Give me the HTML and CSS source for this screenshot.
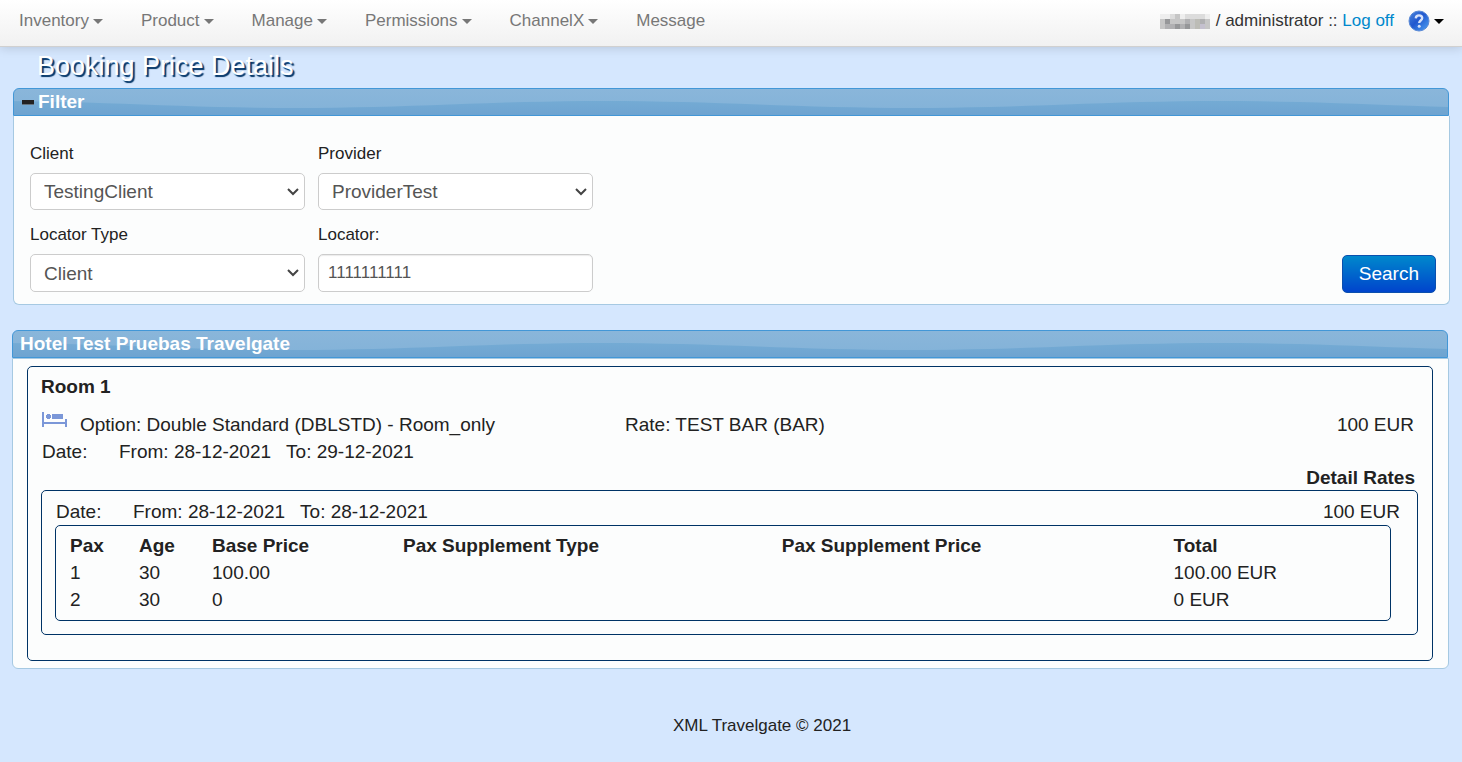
FILE: index.html
```html
<!DOCTYPE html>
<html lang="en">
<head>
<meta charset="utf-8">
<title>Booking Price Details</title>
<link rel="stylesheet" href="styles.css">
</head>
<body>
<header class="navbar">
  <nav class="menu" aria-label="Main">
    <a href="#">Inventory<span class="caret"></span></a>
    <a href="#">Product<span class="caret"></span></a>
    <a href="#">Manage<span class="caret"></span></a>
    <a href="#">Permissions<span class="caret"></span></a>
    <a href="#">ChannelX<span class="caret"></span></a>
    <a href="#">Message</a>
  </nav>
  <div class="account">
    <svg class="redacted" width="50" height="15" viewBox="0 0 50 15" aria-hidden="true">
      <path fill="#dcdcdc" d="M0 0h50v15H0z"/>
      <path fill="#eee" d="M0 0h10v5H0zM20 0h5v5h-5zM45 0h5v5h-5z"/>
      <path fill="#c6c6c6" d="M0 5h5v10H0zM10 5h5v5h-5zM15 0h5v10h-5zM20 5h5v5h-5zM30 5h5v10h-5zM45 5h5v10h-5z"/>
      <path fill="#b0b0b2" d="M5 10h5v5H5zM10 10h5v5h-5zM20 10h5v5h-5zM25 5h5v5h-5zM40 5h5v5h-5z"/>
      <path fill="#969799" d="M5 5h5v5H5zM15 10h5v5h-5zM25 10h5v5h-5z"/>
      <path fill="#bcbcb6" d="M35 5h5v10h-5z"/>
      <path fill="#c4c0ce" d="M40 10h5v5h-5z"/>
    </svg>
    <span>/ administrator :: <a class="logoff" href="#">Log off</a></span>
    <button class="help" type="button" aria-label="Help">
      <svg width="22" height="22" viewBox="0 0 22 22" aria-hidden="true">
        <defs>
          <linearGradient id="helpFill" x1="0" y1="0" x2="1" y2="1">
            <stop offset="0" stop-color="#4a86dc"/>
            <stop offset=".45" stop-color="#2158cf"/>
            <stop offset="1" stop-color="#4fa4f4"/>
          </linearGradient>
        </defs>
        <circle cx="11" cy="11" r="10" fill="url(#helpFill)" stroke="#5b8ad6"/>
        <path d="M7.800 8.400C7.900 6.300 9.200 5.400 11 5.400c1.900 0 3.200 1 3.200 2.700 0 2.300-3 2.500-3 4.900" fill="none" stroke="#d6e2fa" stroke-width="2.400"/>
        <circle cx="11.200" cy="16.200" r="1.500" fill="#d6e2fa"/>
      </svg>
      <span class="caret"></span>
    </button>
  </div>
</header>

<main>
  <h1 class="title">Booking Price Details</h1>

  <section class="panel filter">
    <h2 class="bar">
      <svg class="wave" width="100%" height="100%" aria-hidden="true">
        <defs>
          <linearGradient id="waveFill" x1="0" y1="0" x2="0" y2="1">
            <stop offset="0" stop-color="#74abd4"/>
            <stop offset="1" stop-color="#6ea4d1"/>
          </linearGradient>
          <pattern id="wave" width="616" height="26" x="-26" patternUnits="userSpaceOnUse">
            <path fill="url(#waveFill)" d="M0 12C110 12 200 19 308 19S506 12 616 12V26H0z"/>
          </pattern>
        </defs>
        <rect width="100%" height="100%" fill="url(#wave)"/>
      </svg>
      <svg class="minus" width="12" height="5" viewBox="0 0 12 5" aria-hidden="true"><path fill="#65737e" d="M0 0h12v5H0z"/><path fill="#222" d="M0 0h12v4H0z"/></svg>
      <span class="bar-text">Filter</span>
    </h2>
    <form class="filter-body">
      <div class="field">
        <label for="client">Client</label>
        <div class="select"><select id="client"><option>TestingClient</option></select><svg width="12" height="8" viewBox="0 0 12 8" aria-hidden="true"><path d="M1 1l5 5 5-5"/></svg></div>
      </div>
      <div class="field">
        <label for="provider">Provider</label>
        <div class="select"><select id="provider"><option>ProviderTest</option></select><svg width="12" height="8" viewBox="0 0 12 8" aria-hidden="true"><path d="M1 1l5 5 5-5"/></svg></div>
      </div>
      <div class="field first">
        <label for="locator-type">Locator Type</label>
        <div class="select"><select id="locator-type"><option>Client</option></select><svg width="12" height="8" viewBox="0 0 12 8" aria-hidden="true"><path d="M1 1l5 5 5-5"/></svg></div>
      </div>
      <div class="field">
        <label for="locator">Locator:</label>
        <input id="locator" type="text" value="1111111111">
      </div>
      <button class="search" type="button">Search</button>
    </form>
  </section>

  <section class="panel hotel">
    <h2 class="bar">
      <svg class="wave" width="100%" height="100%" aria-hidden="true"><rect width="100%" height="100%" fill="url(#wave)"/></svg>
      <span class="bar-text">Hotel Test Pruebas Travelgate</span>
    </h2>
    <div class="hotel-body">
      <div class="box room">
        <h3 class="room-name">Room 1</h3>
        <div class="option">
          <div class="option-name">
            <svg width="26" height="17" viewBox="0 0 26 17" aria-hidden="true">
              <path fill="#7b97d8" d="M0 1h2v10h21V8h2v8h-2v-3H2v3H0z"/>
              <path fill="#7b97d8" d="M5 3h3v1h1v3H8v1H5V7H4V4h1zM10 3h11v5H10z"/>
            </svg>
            <span>Option: Double Standard (DBLSTD) - Room_only</span>
          </div>
          <div class="rate">Rate: TEST BAR (BAR)</div>
          <div class="price">100 EUR</div>
        </div>
        <div class="dates"><span class="date-label">Date:</span><span class="from">From: 28-12-2021</span><span>To: 29-12-2021</span></div>
        <h4 class="detail-title">Detail Rates</h4>
        <div class="box detail">
          <div class="dates"><span class="date-label">Date:</span><span class="from">From: 28-12-2021</span><span>To: 28-12-2021</span><span class="amount">100 EUR</span></div>
          <div class="box pax">
            <table>
              <thead>
                <tr><th class="c-pax">Pax</th><th class="c-age">Age</th><th class="c-base">Base Price</th><th class="c-type">Pax Supplement Type</th><th class="c-supp">Pax Supplement Price</th><th>Total</th></tr>
              </thead>
              <tbody>
                <tr><td>1</td><td>30</td><td>100.00</td><td></td><td></td><td>100.00 EUR</td></tr>
                <tr><td>2</td><td>30</td><td>0</td><td></td><td></td><td>0 EUR</td></tr>
              </tbody>
            </table>
          </div>
        </div>
      </div>
    </div>
  </section>
</main>

<footer class="footer">XML Travelgate © 2021</footer>
</body>
</html>
```

FILE: styles.css
```css
* { box-sizing: border-box; }

body {
  margin: 0;
  background: #d5e7fe;
  color: #222;
  font: 19px/27px "Liberation Sans", Arial, sans-serif;
}

h1, h2, h3, h4 { margin: 0; font-size: 19px; }
button, input, select { font-family: inherit; }

.navbar {
  display: flex;
  justify-content: space-between;
  align-items: center;
  height: 47px;
  padding: 0 18px 4px 19px;
  border-bottom: 1px solid #d0d0d0;
  background: linear-gradient(#fff, #f1f1f1);
  box-shadow: 0 1px 10px rgba(0, 0, 0, .15);
  font-size: 17px;
  line-height: 24px;
}
.menu { display: flex; gap: 38px; }
.menu a { display: flex; align-items: center; gap: 4px; color: #777; text-decoration: none; }
.caret {
  border: 5px solid transparent;
  border-top-color: currentColor;
  border-bottom: 0;
}
.account { display: flex; align-items: center; color: #333; }
.redacted { margin-right: 6px; }
.logoff { color: #08c; text-decoration: none; }
.help {
  display: flex;
  align-items: center;
  gap: 4px;
  margin-left: 14px;
  padding: 0;
  border: 0;
  background: none;
  color: #000;
}

.title {
  padding: 0 37px;
  height: 41px;
  color: #fff;
  font-size: 27px;
  font-weight: normal;
  line-height: 39px;
  text-shadow: 2px 2px 1px #003366;
}

.bar {
  position: relative;
  display: flex;
  align-items: center;
  height: 28px;
  margin-right: 1px;
  padding: 0 7px;
  border: 1px solid #4297d7;
  border-radius: 6px 6px 0 0;
  background: linear-gradient(#8ab6da, #82b2d8);
  color: #fff;
  line-height: 26px;
  overflow: hidden;
}
.wave { position: absolute; inset: 0; }
.minus { position: relative; margin: 0 4px 0 1px; }
.bar-text { position: relative; }

.filter { margin: 0 12px 25px 13px; }
.filter-body {
  display: grid;
  grid-template-columns: 275px 275px 1fr;
  gap: 12px 13px;
  padding: 25px 13px 12px 16px;
  border: 1px solid #a6c9e2;
  border-top: 0;
  border-radius: 0 0 6px 6px;
  background: #fcfdfd;
}
.field { display: flex; flex-direction: column; gap: 7px; }
.field.first { grid-column: 1; }
.field label { font-size: 17px; line-height: 25px; }
.select { position: relative; }
.select svg {
  position: absolute;
  right: 6px;
  top: 15px;
  fill: none;
  stroke: #444;
  stroke-width: 2;
  pointer-events: none;
}
select, input {
  width: 100%;
  height: 37px;
  border: 1px solid #ccc;
  border-radius: 5px;
  background: #fff;
  color: #555;
}
select { display: block; padding: 0 13px; appearance: none; font-size: 19px; }
input { height: 38px; padding: 0 9px; font-size: 17px; box-shadow: inset 0 1px 1px rgba(0, 0, 0, .08); }
.first select { height: 38px; }
.search {
  align-self: end;
  justify-self: end;
  height: 38px;
  margin-bottom: -1px;
  padding: 0 16px;
  border: 1px solid #0a4fae;
  border-radius: 5px;
  background: linear-gradient(#08c, #04c);
  color: #fff;
  font-size: 19px;
}

.hotel { margin: 0 13px 0 12px; }
.hotel-body {
  padding: 7px 15px 7px 14px;
  border: 1px solid #a6c9e2;
  border-radius: 0 0 6px 6px;
  background: #fcfdfd;
}
.box { border: 1px solid #003366; border-radius: 5px; }
.room { padding: 6px 14px 25px 13px; }
.option {
  display: grid;
  grid-template-columns: 584px 1fr auto;
  margin-top: 11px;
  padding-right: 4px;
}
.option-name { display: flex; gap: 12px; padding-left: 1px; }
.price { text-align: right; }
.dates { display: flex; padding-left: 1px; }
.date-label { width: 77px; }
.from { margin-right: 15px; }
.amount { margin-left: auto; }
.detail-title { margin-right: 3px; line-height: 25px; text-align: right; }
.detail { padding: 7px 26px 13px 13px; }
.detail .dates { margin-right: -9px; }
.pax { padding: 6px 14px 7px; }
.pax table { width: 100%; table-layout: fixed; border-collapse: collapse; }
.pax th, .pax td { height: 27px; padding: 0; text-align: left; }
.c-pax { width: 69px; }
.c-age { width: 73px; }
.c-base { width: 191px; }
.c-type { width: 29%; }
.c-supp { width: 30%; }

.footer {
  padding: 43px 0 22px 62px;
  text-align: center;
  font-size: 17px;
}
```
